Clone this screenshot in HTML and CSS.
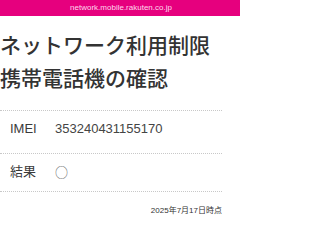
FILE: index.html
```html
<!DOCTYPE html>
<html lang="ja">
<head>
<meta charset="utf-8">
<title>ネットワーク利用制限携帯電話機の確認</title>
<link rel="stylesheet" href="styles.css">
</head>
<body>
<header class="urlbar">network.mobile.rakuten.co.jp</header>
<main class="page">
  <h1 class="title">ネットワーク利用制限<br>携帯電話機の確認</h1>
  <div class="row row-first">
    <span class="label">IMEI</span>
    <span class="value">353240431155170</span>
  </div>
  <div class="row row-last">
    <span class="label">結果</span>
    <span class="value mark">○</span>
  </div>
  <p class="date">2025年7月17日時点</p>
</main>
</body>
</html>
```
FILE: styles.css
```css
html, body {
  margin: 0;
  padding: 0;
  background: #ffffff;
}
body {
  font-family: "Liberation Sans", "Noto Sans CJK JP", sans-serif;
  color: #333333;
}
.urlbar {
  width: 238px;
  height: 16px;
  line-height: 15px;
  background: #e6007e;
  color: #ffd9ec;
  font-size: 8px;
  text-align: center;
  padding-left: 2px;
}
.page {
  width: 222px;
  padding-top: 12px;
}
.title {
  margin: 0 0 16px 0;
  font-family: "Noto Sans CJK JP", sans-serif;
  font-size: 21px;
  font-weight: 500;
  line-height: 33px;
  color: #333333;
  letter-spacing: 0;
}
.row {
  display: flex;
  align-items: center;
  border-top: 1px dotted #c8c8c8;
  padding-left: 10px;
  font-size: 13px;
  line-height: 20px;
}
.row-first {
  padding-top: 8px;
  padding-bottom: 14px;
}
.row-last {
  padding-top: 8px;
  padding-bottom: 9px;
  border-bottom: 1px dotted #c8c8c8;
}
.label {
  width: 45px;
  color: #3a3a3a;
}
.value {
  color: #444444;
}
.mark {
  font-family: "Noto Sans CJK JP", sans-serif;
  font-size: 13px;
  font-weight: 300;
  color: #555555;
}
.date {
  margin: 13px 0 0 0;
  text-align: right;
  font-size: 8px;
  line-height: 12px;
  color: #333333;
}
```
